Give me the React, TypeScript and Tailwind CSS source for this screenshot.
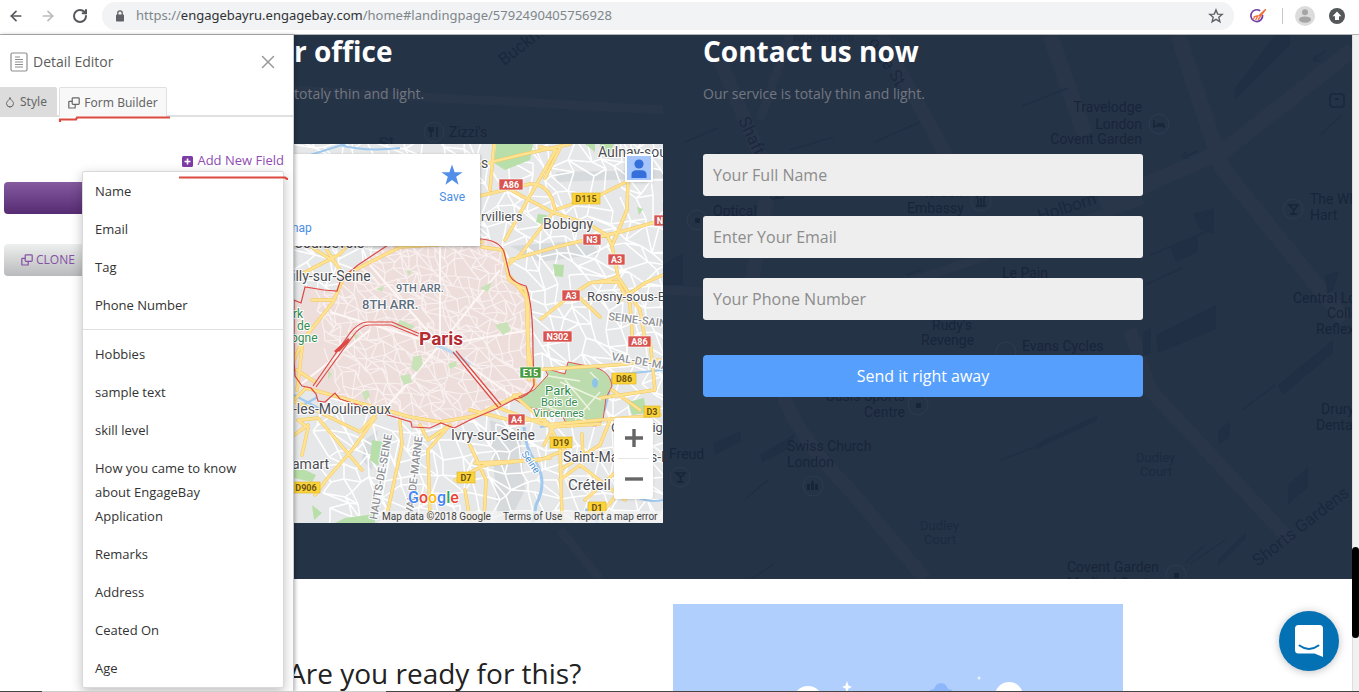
import React from "react";
import { ArrowLeft, ArrowRight, RotateCw, Lock, Star, X, Droplet } from "lucide-react";

const primaryFields = ["Name", "Email", "Tag", "Phone Number"];
const customFields = [
  "Hobbies",
  "sample text",
  "skill level",
  "How you came to know about EngageBay Application",
  "Remarks",
  "Address",
  "Ceated On",
  "Age",
];

function CloneIcon({ className }: { className?: string }) {
  return (
    <svg viewBox="0 0 12 12" className={className} fill="none" stroke="currentColor" strokeWidth="1.2" aria-hidden="true">
      <rect x="4.2" y="0.8" width="7" height="6.6" rx="0.8" />
      <path d="M4.2 4.4H1.4a.6.6 0 0 0-.6.6v5.4c0 .4.2.6.6.6h5.2c.4 0 .6-.2.6-.6V7.4" />
    </svg>
  );
}

function BrandMark() {
  return (
    <svg viewBox="0 0 18 16" className="h-4 w-[18px]" fill="none" aria-hidden="true">
      <path d="M11.2 2.900A5.900 5.900 0 1 0 13.600 7" stroke="#6d3fa8" strokeWidth="1.700" />
      <path d="M4.200 11.400L5.600 9M6.600 12L8.800 8M9 11.800L16.800 1.200M4.600 9.200L7 8.200L10.200 7.600L16.500 1.400" stroke="#f0713f" strokeWidth="1.400" />
    </svg>
  );
}

function BrowserBar() {
  return (
    <header className="flex h-[35px] shrink-0 items-start border-b border-[#b4b4b4] bg-white pt-0.5">
      <nav className="flex h-7 w-[102px] shrink-0 items-center gap-4 pl-2">
        <button aria-label="Back"><ArrowLeft className="size-4 text-[#55585c]" strokeWidth={2.6} /></button>
        <button aria-label="Forward"><ArrowRight className="size-4 text-[#b9bbbd]" strokeWidth={2.6} /></button>
        <button aria-label="Reload"><RotateCw className="size-4 text-[#55585c]" strokeWidth={3} /></button>
      </nav>
      <div className="flex h-7 min-w-0 flex-1 items-center rounded-full bg-[#f1f3f4] pl-3 pr-2.5">
        <svg viewBox="0 0 12 12" className="size-3 shrink-0" aria-hidden="true">
          <rect x="2" y="4.500" width="8" height="7" rx="0.800" fill="#5f6368" />
          <path d="M3.800 5V3a2.200 2.200 0 0 1 4.400 0v2" stroke="#5f6368" strokeWidth="1.300" fill="none" />
        </svg>
        <div className="ml-2.5 min-w-0 flex-1 truncate font-['Noto_Sans',sans-serif] text-[13px] text-[#80868b]">
          https://<span className="text-[#303236]">engagebayru.engagebay.com</span>/home#landingpage/5792490405756928
        </div>
        <button aria-label="Bookmark">
          <svg viewBox="0 0 16 16" className="size-4" aria-hidden="true">
            <path d="M8 1.900L9.700 6.100L14.200 6.400L10.800 9.300L11.900 13.700L8 11.300L4.100 13.700L5.200 9.300L1.800 6.400L6.300 6.100z" fill="none" stroke="#5f6368" strokeWidth="1.400" />
          </svg>
        </button>
      </div>
      <div className="flex h-7 w-[125px] shrink-0 items-center pl-[15px]">
        <BrandMark />
        <span className="ml-[15px] h-4 w-px bg-[#c8c8c8]" />
        <button aria-label="Profile" className="ml-3">
          <svg viewBox="0 0 20 20" className="size-5">
            <circle cx="10" cy="10" r="10" fill="#dcdcdc" />
            <circle cx="10" cy="6.2" r="3" fill="#a5a5a5" />
            <ellipse cx="10" cy="13.6" rx="6" ry="3.2" fill="#a5a5a5" />
          </svg>
        </button>
        <button aria-label="Update" className="ml-3.5">
          <svg viewBox="0 0 16 16" className="size-4">
            <circle cx="8" cy="8" r="8" fill="#55585b" />
            <path d="M8 3.600l4.400 4.600H10V12H6V8.200H3.600z" fill="#fff" />
          </svg>
        </button>
      </div>
    </header>
  );
}

function FieldMenu() {
  const item = "block w-full px-3 py-[7px] text-left text-[13px] leading-6 text-[#333] hover:bg-gray-100";
  return (
    <ul className="absolute right-[9px] top-[136px] z-20 w-[202px] rounded-xs border border-[#d9d9d9] bg-white shadow-[0_4px_12px_rgba(0,0,0,0.25)]">
      {primaryFields.map((f) => (
        <li key={f}><button className={item}>{f}</button></li>
      ))}
      <li role="separator" className="my-[5px] h-px bg-[#e0e0e0]" />
      {customFields.map((f) => (
        <li key={f}><button className={item}>{f}</button></li>
      ))}
    </ul>
  );
}

function Sidebar() {
  return (
    <aside className="relative z-10 w-[294px] shrink-0 border-r border-[#c9ccd0] bg-white shadow-[1px_0_4px_rgba(0,0,0,0.3)]">
      <div className="flex h-13 items-center pl-2.5 pr-3.5 pt-0.5">
        <svg viewBox="0 0 18 20" className="h-5 w-[18px]" fill="none" stroke="#8d8d8d" strokeWidth="1.2" aria-hidden="true">
          <rect x="1" y="1" width="16" height="18" rx="1.5" />
          <path d="M5 5h5M5 7.500h8M5 10h8M5 12.500h8M5 15h8" />
        </svg>
        <h2 className="ml-[5px] flex-1 text-sm text-[#5c5c5c]">Detail Editor</h2>
        <button aria-label="Close"><X className="size-[22px] text-[#999]" strokeWidth={1.6} /></button>
      </div>
      <div className="flex h-[30px] gap-0.5 border-b-2 border-[#dfe0e2] font-['Noto_Sans',sans-serif] text-xs text-[#666]">
        <button className="flex h-[30px] w-[57px] items-center gap-1 rounded-tr-xs bg-[#dcdcdc] pl-1">
          <Droplet className="size-3" strokeWidth={2} />Style
        </button>
        <button className="flex h-[30px] w-[108px] items-center justify-center gap-1 rounded-t-xs border border-b-0 border-[#dfe0e2] bg-[#f8f8f8]">
          <CloneIcon className="size-3" />Form Builder
        </button>
      </div>
      <div className="flex justify-end pr-[9px] pt-8">
        <button className="flex h-6 items-center gap-1 text-[13px] text-[#8f4db3]">
          <svg viewBox="0 0 11 11" className="size-[11px]" aria-hidden="true">
            <rect width="11" height="11" rx="1.5" fill="#7d3ca5" />
            <path d="M5.500 2.500v6M2.500 5.500h6" stroke="#fff" strokeWidth="1.600" />
          </svg>
          Add New Field
        </button>
      </div>
      <div className="flex flex-col gap-[30px] px-1 pt-[9px]">
        <button aria-label="Edit field" className="h-8 w-24 rounded-sm bg-linear-to-b from-[#855a9f] to-[#572b73]" />
        <button className="flex h-8 w-24 items-center gap-[3px] rounded-sm bg-linear-to-b from-[#eeefef] to-[#b9babb] pl-[17px] text-xs text-[#8450a5]">
          <CloneIcon className="size-3" />CLONE
        </button>
      </div>
      <FieldMenu />
      <svg viewBox="0 35 294 160" className="pointer-events-none absolute left-0 top-0 z-30 h-40 w-[294px]" fill="none" stroke="#dc4a40" strokeWidth="2.200" aria-hidden="true">
        <path d="M60 122v-2.500h16l1-2h93" />
        <path d="M179 177.500h106l2 1.500h1" />
      </svg>
    </aside>
  );
}

/* Deterministic noise so that the street mesh is identical on every render. */
function noise(n: number) {
  const v = Math.sin(n * 127.1 + 11.7) * 43758.5453;
  return v - Math.floor(v);
}

function streetMesh(cell: number, jitter: number, seed: number) {
  const cols = Math.ceil(400 / cell);
  const rows = Math.ceil(400 / cell);
  const pt = (c: number, r: number) => {
    const k = seed + c * 61 + r * 17;
    return [
      Math.round(280 + c * cell + r * 2 + (noise(k) - 0.5) * jitter),
      Math.round(135 + r * cell - c + (noise(k + 0.5) - 0.5) * jitter),
    ];
  };
  let d = "";
  for (let r = 0; r < rows; r++) {
    for (let c = 0; c < cols; c++) {
      const [x, y] = pt(c, r);
      const k = noise(seed + c * 7 + r * 31);
      if (k > 0.15) d += `M${x} ${y}L${pt(c + 1, r).join(" ")}`;
      if (k < 0.85) d += `M${x} ${y}L${pt(c, r + 1).join(" ")}`;
      if (k > 0.6) d += `M${x} ${y}L${pt(c + 1, r + 1).join(" ")}`;
    }
  }
  return d;
}

const wideMesh = streetMesh(15, 15, 3);
const denseMesh = streetMesh(9, 10, 40);

const cityOutline =
  "M294 300L301 303L305 287L324 290L337 291L341 279L358 265L388 245L400 239H482Q500 241 504 252L510 276Q514 283 526 286Q533 303 533 352L534 385Q529 397 515 399L496 409L470 420L454 428L441 423L430 428L412 427L411 422L388 415L340 399L335 393L325 402L318 401L316 394L311 388L302 386L295 376L294 360Z";

const majorRoads = [
  "M294 400L306 388L342 398L410 417L440 422L475 416L520 394",
  "M290 400L315 410L360 432L375 415",
  "M300 420L318 418L345 450L362 470",
  "M375 418L352 450L326 480L315 495",
  "M400 420L402 445L388 510M420 425L428 440L450 425L428 450L430 520",
  "M294 435L308 425M302 455L308 428L298 420",
  "M297 390L303 340L333 302L345 275L400 247L482 242",
  "M303 340L294 360M333 300L312 300M297 370L315 382",
  "M294 278L340 254L370 220M300 240L335 262M323 244L340 270",
  "M475 166L520 155L570 144M475 197L530 184Q550 183 555 210L520 255L508 265",
  "M500 184L520 195L552 212L588 224L607 235L612 246",
  "M540 147L556 150L505 240M560 148L545 178M494 144L490 190",
  "M628 178L627 210L612 246L618 276L610 280L590 283L570 296L541 319",
  "M558 209L600 195L626 182M510 260L560 246L620 232L663 220",
  "M580 298L600 317M596 282L618 282L630 304L633 345",
  "M663 275L645 283L620 300M618 277L640 310L645 340",
  "M510 276L528 300L528 345L535 386M482 247L503 250L509 280L526 290L529 380",
  "M514 395L550 427L600 424M531 370L615 365L660 360",
  "M470 410L510 420L545 420M496 407L545 425L600 420L660 415",
  "M547 422L560 445L562 520M560 470L600 445L610 420M560 480L580 465L625 500",
  "M600 398L655 390L650 340M612 390L640 410M582 434L583 460M475 463L540 460L565 450",
  "M455 480L485 465L550 458M465 490L470 520M470 445L486 480L484 520",
  "M544 445L553 428M625 485L600 515M585 500L640 450",
];

const shields = [
  { t: "A86", x: 499, y: 179, w: 24, k: "r" },
  { t: "D115", x: 572, y: 193, w: 28, k: "y" },
  { t: "N3", x: 583, y: 234, w: 18, k: "r" },
  { t: "N", x: 654, y: 215, w: 12, k: "r" },
  { t: "A3", x: 608, y: 254, w: 17, k: "r" },
  { t: "A3", x: 562, y: 290, w: 18, k: "r" },
  { t: "N302", x: 543, y: 331, w: 29, k: "r" },
  { t: "A86", x: 628, y: 336, w: 23, k: "r" },
  { t: "E15", x: 520, y: 367, w: 21, k: "g" },
  { t: "D86", x: 612, y: 373, w: 24, k: "y" },
  { t: "D3", x: 644, y: 406, w: 16, k: "y" },
  { t: "A4", x: 508, y: 414, w: 17, k: "r" },
  { t: "D19", x: 550, y: 437, w: 22, k: "y" },
  { t: "D7", x: 457, y: 472, w: 18, k: "y" },
  { t: "D906", x: 292, y: 482, w: 28, k: "y" },
  { t: "D1", x: 588, y: 502, w: 18, k: "y" },
];
const shieldFill: Record<string, string> = { r: "#d9534f", y: "#fbd33b", g: "#4a9a3f" };

function ParisMap() {
  return (
    <svg viewBox="294 144 369 379" className="block h-[379px] w-full font-['Roboto',sans-serif]" role="img" aria-label="Map of Paris">
      <defs>
        <clipPath id="city"><path d={cityOutline} /></clipPath>
      </defs>
      <rect x="294" y="144" width="369" height="379" fill="#e6e7e8" />
      <g fill="#d6dadd">
        <path d="M556 172L663 170V178L556 182zM510 246L590 240L600 254L540 262zM365 440L378 430L372 470L362 460zM490 420L520 430L525 490L510 520H498z" />
      </g>
      <path d={wideMesh} stroke="#fff" strokeWidth="1.500" fill="none" />
      <g fill="#b8dfa9">
        <path d="M496 144H533L530 160L505 170L494 163zM294 310L322 290L328 302L303 345L294 352zM538 214l9 1-2 10-9-3zM553 264l11 1-1 12-8-1zM489 250l11 6 4 14-12-8zM294 465l22 10-4 7-18-4zM372 440l12 2-6 24-8-6zM312 505l10 8-8 7zM345 518l30-4v9h-40zM600 144h14l-4 10h-9zM637 207l6 2-4 6zM628 402l16-4 2 15-14 2zM632 459l14 4-3 14-10-5zM585 144h10v8z" />
      </g>
      <g stroke="#9fc9ee" fill="none" strokeWidth="3">
        <path d="M524 427Q525 448 536 463Q548 482 536 505L533 523" />
        <path d="M294 160L345 144M340 145q25 7 60 3" strokeWidth="2" />
        <path d="M294 410L325 393M294 395L322 410M540 427Q590 422 605 410L613 375L663 370M620 485Q640 505 663 500" strokeWidth="2" />
        <path d="M310 330L345 300M585 510q12 0 12 13" />
      </g>
      <path d={cityOutline} fill="#eddedc" />
      <g clipPath="url(#city)">
        <path d={denseMesh} stroke="#f9f1f0" strokeWidth="1.200" fill="none" />
        <path d="M440 345L330 312M440 345L500 270M440 345L515 398M440 345L380 415M440 345L370 265M370 330L300 385M440 345L530 330M440 345L440 245" stroke="#fdf7f5" strokeWidth="2" fill="none" />
        <path d="M413 357l8-2 2 9-6 8-6-4zM400 376l10-2 2 8-8 3zM448 364l8-3 1 5-7 3zM328 370l4 4-4 6zM362 392l6-2 2 6-5 5zM376 289l8-3-2 6zM400 320l15 6-4 4-15-4zM480 288l12-6-4 10zM495 325l12-3 4 8-8 5zM352 333l6 2-2 5zM407 270l5 1-3 5z" fill="#c9e2b8" />
        <path d="M436 345Q455 352 470 365" stroke="#bdd9f0" strokeWidth="3" fill="none" />
      </g>
      <path d="M534 390L548 375L544 368L565 374L568 362L582 365Q610 367 612 386L606 398L603 420L596 426L566 423L561 413L530 408L514 399z" fill="#bcdcae" stroke="#e6514b" strokeWidth="1" />
      <g fill="none" strokeLinejoin="round" strokeLinecap="round">
        <path d={majorRoads.join("")} stroke="#f1c860" strokeWidth="3.400" />
        <path d={majorRoads.join("")} stroke="#ffe292" strokeWidth="2.400" />
      </g>
      <path d="M548 376L580 381M560 382L601 400M542 405L585 420M565 380L590 410M575 420L600 392M598 380l-8-8" stroke="#eef3df" strokeWidth="1.500" fill="none" />
      <ellipse cx="595" cy="383" rx="3" ry="5" fill="#8ec5e7" />
      <g stroke="#dd4a45" fill="none" strokeWidth="1.200">
        <path d={cityOutline} />
        <path d="M313 386L350 333Q359 322 367 322H392L420 334L430 336M316 387L353 336Q361 325 369 325H391L418 336" />
        <path d="M453 352L498 407M456 351L501 405" />
        <path d="M335 352L349 339M338 351L348 341" strokeWidth="2.600" />
      </g>

      <g stroke="#fff" strokeWidth="2" paintOrder="stroke" strokeLinejoin="round" fill="#4c4d52" fontSize="14">
        <text x="481" y="168">s</text>
        <text x="481" y="221" fontSize="13">rvilliers</text>
        <text x="543" y="229">Bobigny</text>
        <text x="598" y="157">Aulnay-sous</text>
        <text x="292" y="281">illy-sur-Seine</text>
        <text x="587" y="301" fontSize="13">Rosny-sous-B</text>
        <text x="293" y="414">-les-Moulineaux</text>
        <text x="451" y="440">Ivry-sur-Seine</text>
        <text x="292" y="469">amart</text>
        <text x="563" y="462">Saint-Maur-des-F</text>
        <text x="568" y="490" fontSize="15">Créteil</text>
        <text x="611" y="432" fontSize="13">Champigny</text>
        <text x="294" y="248">Courbevoie</text>
        <g fill="#5e6e7e" fontWeight="500">
          <text x="396" y="292" fontSize="11">9TH ARR.</text>
          <text x="362" y="309" fontSize="13">8TH ARR.</text>
        </g>
        <g fill="#8f9296" fontSize="11" fontWeight="500">
          <text x="608" y="320" transform="rotate(7 608 320)">SEINE-SAINT</text>
          <text x="611" y="360" transform="rotate(10 611 360)">VAL-DE-MA</text>
          <text x="377" y="520" transform="rotate(-80 377 520)">HAUTS-DE-SEINE</text>
          <text x="413" y="515" transform="rotate(-83 413 515)">VAL-DE-MARNE</text>
        </g>
        <g fill="#348b4d">
          <text x="545" y="395" fontSize="13">Park</text>
          <text x="541" y="406" fontSize="11">Bois de</text>
          <text x="533" y="417" fontSize="11">Vincennes</text>
          <text x="293" y="318" fontSize="12">rk</text>
          <text x="297" y="330" fontSize="12">de</text>
          <text x="291" y="342" fontSize="12">ogne</text>
        </g>
        <text x="521" y="454" fill="#4b91cf" fontSize="10" transform="rotate(55 521 454)">Seine</text>
        <text x="419" y="345" fill="#b32a31" fontSize="19" fontWeight="700">Paris</text>
      </g>

      {shields.map((s) => (
        <g key={s.t + s.x}>
          <rect x={s.x} y={s.y} width={s.w} height="11" fill={shieldFill[s.k]} stroke={s.k === "y" ? "#e2b21f" : "#fff"} strokeWidth="0.600" />
          <text x={s.x + s.w / 2} y={s.y + 9} textAnchor="middle" fontSize="9" fontWeight="700" fill={s.k === "y" ? "#6d5313" : "#fff"}>{s.t}</text>
        </g>
      ))}

      <rect x="380" y="511" width="283" height="12" fill="#f2f2f2" fillOpacity="0.780" />
      <g fontSize="10" fill="#444">
        <text x="382" y="520">Map data ©2018 Google</text>
        <text x="503" y="520">Terms of Use</text>
        <text x="574" y="520">Report a map error</text>
      </g>
      <text x="408" y="503" fontSize="16" fontWeight="500" stroke="#fff" strokeWidth="1.500" paintOrder="stroke">
        <tspan fill="#4285f4">G</tspan><tspan fill="#ea4335">o</tspan><tspan fill="#fbbc05">o</tspan><tspan fill="#4285f4">g</tspan><tspan fill="#34a853">l</tspan><tspan fill="#ea4335">e</tspan>
      </text>
    </svg>
  );
}

function MapEmbed() {
  return (
    <div className="relative w-[369px] overflow-hidden">
      <ParisMap />
      <div className="absolute left-0 top-2.5 flex h-[92px] w-[186px] justify-between bg-white pb-2.5 pr-[15px] pt-2.5 font-['Roboto',sans-serif] text-xs text-[#4a8ee6] shadow-[0_1px_3px_rgba(0,0,0,0.3)]">
        <a href="#map" className="-ml-1.5 self-end">map</a>
        <button className="flex flex-col items-center gap-[3px] self-start">
          <svg viewBox="0 0 20 20" className="size-[22px]" aria-hidden="true">
            <path d="M10 0.500L12.400 7.400H19.600L13.800 11.700L16 18.900L10 14.600L4 18.900L6.200 11.700L0.400 7.400H7.600z" fill="#528fe8" />
          </svg>
          Save
        </button>
      </div>
      <button aria-label="Account" className="absolute right-2.5 top-2.5 border-2 border-white bg-[#a6c5fb] shadow-sm">
        <svg viewBox="0 0 24 24" className="size-6">
          <circle cx="12" cy="8" r="4.600" fill="#346fdc" />
          <path d="M4.500 22v-3.500c0-3 2.500-4.300 5-4.300h5c2.500 0 5 1.300 5 4.300V22z" fill="#346fdc" />
        </svg>
      </button>
      <div className="absolute bottom-6 right-2.5 flex w-[39px] flex-col rounded-xs bg-white shadow-sm">
        <button aria-label="Zoom in" className="flex h-10 items-center justify-center">
          <svg viewBox="0 0 18 18" className="size-[18px]"><path d="M9 0v18M0 9h18" stroke="#666" strokeWidth="3.400" /></svg>
        </button>
        <span className="mx-1 h-px bg-[#e6e6e6]" />
        <button aria-label="Zoom out" className="flex h-10 items-center justify-center">
          <svg viewBox="0 0 18 18" className="size-[18px]"><path d="M0 9h18" stroke="#666" strokeWidth="3.400" /></svg>
        </button>
      </div>
    </div>
  );
}

function NightMap() {
  return (
    <svg viewBox="294 35 1058 544" preserveAspectRatio="xMinYMin slice" className="absolute inset-0 size-full font-['Roboto',sans-serif]" aria-hidden="true">
      <rect x="294" y="35" width="1500" height="800" fill="#253347" />
      <g stroke="#29364a" fill="none" strokeLinejoin="round">
        <path d="M1178 35L1222 168L1345 320M1100 205L1225 150L1352 50M1050 35L1085 135" strokeWidth="16" />
        <path d="M783 395Q800 440 850 490L925 579M1130 330L1150 390L1290 540M720 60L770 180L745 320M880 35L960 180" strokeWidth="14" />
        <path d="M663 290L860 300L1143 200M294 90L663 110M560 530L600 579M790 35L760 120" strokeWidth="9" />
      </g>
      <g fill="#212f44">
        <path d="M1235 100L1290 45V35H1275L1234 90zM1193 214l21-6v26l-14-4zM1170 246l28-10v16l-22 10zM1156 335l60-30v24l-58 24zM1143 332l8-4v26l-8 2zM1278 385l55-45v13l-50 42zM1288 485l20-18v20l-20 18zM1325 275l14-4-6 20-6 3zM713 443l28-12v10l-26 14zM760 455l36-22-8 16-26 14zM1036 444l61-29v6l-61 28zM663 265l20-12v32h-20zM1218 430l12-8v16l-12 6zM1218 560l28-28v6l-28 28z" />
      </g>
      <g stroke="#212f44" strokeWidth="1.500" fill="none">
        <path d="M1022 106L1068 88M1145 285L1182 268M1150 255L1210 230M1242 410L1275 385M745 499L768 480M1000 460L1035 447M685 142L718 128M830 192L840 155M875 142L920 122M1185 563L1205 545M1190 564L1225 540M1320 135L1342 115M700 160l20-8M790 150l43-13M750 580l24-16" />
        <path d="M1182 158l16-7m-16 7l4-6m-4 6l7 0M907 275l14-5M1313 61l13-11m-13 11l3-7m-3 7l8-1" strokeWidth="2" />
      </g>
      <g fill="#182539" fontSize="14">
        <g textAnchor="end">
          <text x="1142" y="112">Travelodge</text>
          <text x="1142" y="129">London</text>
          <text x="1142" y="144">Covent Garden</text>
          <text x="905" y="401">Oasis Sports</text>
          <text x="905" y="417">Centre</text>
        </g>
        <text x="449" y="137">Zizzi&apos;s</text>
        <text x="787" y="451">Swiss Church</text>
        <text x="787" y="467">London</text>
        <text x="669" y="459">Freud</text>
        <text x="713" y="216">Optical</text>
        <text x="907" y="213">Embassy</text>
        <text x="925" y="197">Israeli</text>
        <text x="1002" y="278">Le Pain</text>
        <text x="932" y="330">Rudy&apos;s</text>
        <text x="921" y="345">Revenge</text>
        <text x="1022" y="351">Evans Cycles</text>
        <text x="1310" y="204">The White</text>
        <text x="1310" y="220">Hart</text>
        <text x="1293" y="303">Central London</text>
        <text x="1327" y="318">College</text>
        <text x="1316" y="334">Reflexology</text>
        <text x="1321" y="414">Drury</text>
        <text x="1316" y="430">Dental</text>
        <text x="1067" y="572">Covent Garden</text>
        <text x="1067" y="588">Medical Centre</text>
        <text x="793" y="42" fill="#202d41">Mansions</text>
        <g fontSize="17" fill="#1b283d">
          <text x="504" y="66" transform="rotate(-38 504 66)">Bucknall St</text>
          <text x="738" y="120" transform="rotate(65 738 120)">Shaftesbury</text>
          <text x="868" y="42" transform="rotate(58 868 42)">orge St</text>
          <text x="1258" y="567" transform="rotate(-38 1258 567)">Shorts Gardens</text>
          <text x="1040" y="222" transform="rotate(-18 1040 222)">Holborn</text>
          <text x="380" y="150" transform="rotate(-10 380 150)">St</text>
        </g>
      </g>
      <g fill="#1c2a3f" fontSize="13">
        <text x="1136" y="462">Dudley</text>
        <text x="1140" y="476">Court</text>
        <text x="920" y="530">Dudley</text>
        <text x="924" y="544">Court</text>
      </g>
      <g fill="none" stroke="#2e3b50">
        {[[1159, 124], [1293, 209], [680, 477], [813, 486], [918, 405], [1176, 575], [434, 132], [697, 220], [981, 201], [1006, 352]].map(([x, y]) => (
          <circle key={x} cx={x} cy={y} r="10" />
        ))}
      </g>
      <g stroke="#182539" strokeWidth="1.500" fill="none">
        <path d="M1289 205h9l-4 5zM1293.500 210v4M1290 214h7M676 473h9l-4 4zM680.500 477v5M677 482h7M1154 120v8M1154 126h10v2M1157 124h7M431 127v10M437 127v10M429 127v4h4v-4M976 206h10M978 198v7M981 198v7M984 198v7M976 197l5-3 5 3" />
        <rect x="1330" y="94" width="14" height="13" rx="3" strokeWidth="2" stroke="#1c293e" />
        <path d="M1335 99h4" />
      </g>
      <g fill="#182539">
        <path d="M807 484h3v6h-3zM815 484h3v6h-3zM811 490v-7l1.500-3 1.500 3v7zM916 403h5v5h-5zM1174 573h5v5h-5zM695 218h5v5h-5z" />
      </g>
    </svg>
  );
}

function ContactSection() {
  const heading = "text-[28px] font-bold leading-8 text-white";
  const input = "h-[42px] w-full rounded-[3px] bg-[#eee] px-2.5 text-base text-[#555] outline-none placeholder:text-[#8c8c8c]";
  const fields = ["Your Full Name", "Enter Your Email", "Your Phone Number"];
  return (
    <section className="relative shrink-0 overflow-hidden bg-[#253347]">
      <NightMap />
      <div className="relative flex gap-10 pb-14">
        <div className="w-[369px]">
          <h2 className={heading}>r office</h2>
          <p className="mt-4 text-sm leading-[22px] text-[#737780]">totaly thin and light.</p>
          <div className="mt-[39px]"><MapEmbed /></div>
        </div>
        <div className="w-[440px]">
          <h2 className={heading}>Contact us now</h2>
          <p className="mt-4 text-sm leading-[22px] text-[#737780]">Our service is totaly thin and light.</p>
          <form className="mt-[49px] flex flex-col gap-5">
            {fields.map((f) => (
              <input key={f} className={input} placeholder={f} aria-label={f} />
            ))}
            <button type="button" className="mt-[15px] h-[42px] rounded-sm bg-[#569ffd] text-base font-medium text-white">
              Send it right away
            </button>
          </form>
        </div>
      </div>
    </section>
  );
}

function ReadySection() {
  return (
    <section className="flex flex-1 bg-white pt-[25px]">
      <h2 className="-ml-1.5 w-[385px] shrink-0 pt-[49px] text-[28px] leading-10 text-[#222]">Are you ready for this?</h2>
      <div className="w-[450px] bg-[#b0cffd]">
        <svg viewBox="0 0 450 88" className="block h-[88px] w-full" aria-hidden="true">
          <circle cx="135" cy="97" r="15" fill="#fff" />
          <circle cx="336" cy="92" r="14" fill="#fff" />
          <path d="M255 88q3-3 6-3q2-6 7-6t7 6q3 0 6 3z" fill="#8db7fb" />
          <path d="M174 77l1.500 4.500 3.500 1.500-3.500 1.500L174 89l-1.500-4.500L169 83l3.500-1.500z" fill="#fff" />
          <circle cx="306" cy="74" r="1.500" fill="#e8f2ff" />
        </svg>
      </div>
    </section>
  );
}

export default function App() {
  return (
    <div className="relative flex h-screen flex-col overflow-hidden bg-white font-['Open_Sans',sans-serif]">
      <BrowserBar />
      <div className="flex min-h-0 flex-1">
        <Sidebar />
        <main className="flex min-w-0 flex-1 flex-col overflow-hidden">
          <ContactSection />
          <ReadySection />
        </main>
        <div className="w-[7px] shrink-0 border-l border-[#ddd] bg-[#f1f1f1] pt-[512px]">
          <div className="-ml-px h-[91px] rounded-sm bg-black" />
        </div>
      </div>
      <button aria-label="Open chat" className="absolute bottom-[21px] right-5 z-20 flex size-15 items-center justify-center rounded-full bg-[#0471b4] shadow-[0_1px_8px_rgba(0,0,0,0.25)]">
        <svg viewBox="0 0 28 32" className="h-8 w-7" aria-hidden="true">
          <path d="M3.500 0h21A3.500 3.500 0 0 1 28 3.500V32l-8.500-3.500h-16A3.500 3.500 0 0 1 0 25V3.500A3.500 3.500 0 0 1 3.500 0z" fill="#fff" />
          <path d="M4.500 20.500q9.500 7 19 0" stroke="#0471b4" strokeWidth="2" strokeLinecap="round" fill="none" />
        </svg>
      </button>
      <div className="absolute inset-x-0 bottom-0 z-30 flex h-px">
        <span className="w-[42px] bg-[#454545]" />
        <span className="w-[344px] bg-[#cfcfcf]" />
        <span className="flex-1 bg-[#454545]" />
      </div>
    </div>
  );
}
